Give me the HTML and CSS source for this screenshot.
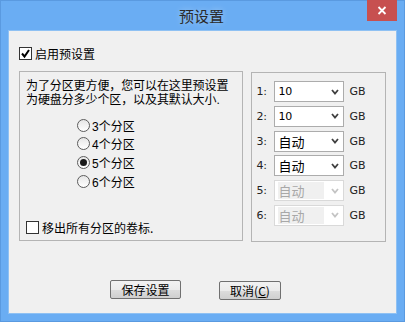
FILE: index.html
```html
<!DOCTYPE html>
<html lang="zh-CN">
<head>
    <meta charset="UTF-8">
    <title>预设置</title>
    <link rel="stylesheet" href="styles.css">
</head>
<body>
    <div class="window">
        <div class="titlebar">
            <span class="title">预设置</span>
            <span class="close-btn">
                <svg width="10" height="9" viewBox="0 0 10 9">
                    <path d="M1.5 1 L8.5 8 M8.5 1 L1.5 8" stroke="#fff" stroke-width="1.8"/>
                </svg>
            </span>
        </div>
        <div class="client">
            <label class="check-row">
                <span class="checkbox checked">
                    <svg width="11" height="11" viewBox="0 0 11 11">
                        <path d="M2 5.5 L4.5 8.5 L9 2" fill="none" stroke="#000" stroke-width="2"/>
                    </svg>
                </span>
                <span>启用预设置</span>
            </label>

            <div class="groups">
                <div class="group left-group">
                    <p class="intro">为了分区更方便，您可以在这里预设置<br>为硬盘分多少个区，以及其默认大小.</p>
                    <div class="radio-list">
                        <div class="radio-row"><span class="radio"></span><span>3个分区</span></div>
                        <div class="radio-row"><span class="radio"></span><span>4个分区</span></div>
                        <div class="radio-row"><span class="radio on"></span><span>5个分区</span></div>
                        <div class="radio-row"><span class="radio"></span><span>6个分区</span></div>
                    </div>
                    <label class="check-row bottom-check">
                        <span class="checkbox"></span>
                        <span>移出所有分区的卷标.</span>
                    </label>
                </div>

                <div class="group right-group">
                    <div class="size-row">
                        <span class="num">1:</span>
                        <span class="combo"><span class="val">10</span><svg class="arrow" width="8" height="6" viewBox="0 0 8 6"><path d="M1 1 L4 4.5 L7 1" fill="none" stroke="#404040" stroke-width="1.8"/></svg></span>
                        <span class="unit">GB</span>
                    </div>
                    <div class="size-row">
                        <span class="num">2:</span>
                        <span class="combo"><span class="val">10</span><svg class="arrow" width="8" height="6" viewBox="0 0 8 6"><path d="M1 1 L4 4.5 L7 1" fill="none" stroke="#404040" stroke-width="1.8"/></svg></span>
                        <span class="unit">GB</span>
                    </div>
                    <div class="size-row">
                        <span class="num">3:</span>
                        <span class="combo"><span class="val cjk">自动</span><svg class="arrow" width="8" height="6" viewBox="0 0 8 6"><path d="M1 1 L4 4.5 L7 1" fill="none" stroke="#404040" stroke-width="1.8"/></svg></span>
                        <span class="unit">GB</span>
                    </div>
                    <div class="size-row">
                        <span class="num">4:</span>
                        <span class="combo"><span class="val cjk">自动</span><svg class="arrow" width="8" height="6" viewBox="0 0 8 6"><path d="M1 1 L4 4.5 L7 1" fill="none" stroke="#404040" stroke-width="1.8"/></svg></span>
                        <span class="unit">GB</span>
                    </div>
                    <div class="size-row">
                        <span class="num">5:</span>
                        <span class="combo disabled"><span class="val cjk">自动</span><svg class="arrow" width="8" height="6" viewBox="0 0 8 6"><path d="M1 1 L4 4.5 L7 1" fill="none" stroke="#c4c4c4" stroke-width="1.8"/></svg></span>
                        <span class="unit">GB</span>
                    </div>
                    <div class="size-row">
                        <span class="num">6:</span>
                        <span class="combo disabled"><span class="val cjk">自动</span><svg class="arrow" width="8" height="6" viewBox="0 0 8 6"><path d="M1 1 L4 4.5 L7 1" fill="none" stroke="#c4c4c4" stroke-width="1.8"/></svg></span>
                        <span class="unit">GB</span>
                    </div>
                </div>
            </div>

            <div class="buttons">
                <button class="btn save-btn">保存设置</button>
                <button class="btn cancel-btn">取消(<u>C</u>)</button>
            </div>
        </div>
    </div>
</body>
</html>
```

FILE: styles.css
```css
* {
    box-sizing: border-box;
}

body {
    margin: 0;
    font-family: "Liberation Sans", "Noto Sans CJK SC", sans-serif;
    font-size: 12px;
    color: #000;
}

.window {
    width: 405px;
    height: 322px;
    background-color: #6aadf3;
    border: 1px solid #5a9ae0;
    display: flex;
    flex-direction: column;
}

.titlebar {
    height: 29px;
    display: flex;
    align-items: center;
    justify-content: center;
    position: relative;
}

.title {
    font-family: "Noto Sans CJK SC", sans-serif;
    font-size: 15px;
    color: #2a2a2a;
    margin-top: -1px;
    margin-left: -2px;
    text-shadow: 0 0 6px rgba(255, 255, 255, 0.4);
}

.close-btn {
    position: absolute;
    top: -1px;
    right: 7px;
    width: 30px;
    height: 21px;
    background-color: #c75050;
    display: flex;
    align-items: center;
    justify-content: center;
}

.client {
    margin: 0 7px;
    height: 284px;
    background-color: #f0f0f0;
    border: 1px solid #8fc1f3;
    padding: 16px 10px 0 10px;
    display: flex;
    flex-direction: column;
}

.check-row {
    display: flex;
    align-items: center;
    height: 13px;
    gap: 3px;
    font-family: "Noto Sans CJK SC", sans-serif;
}

.checkbox {
    width: 13px;
    height: 13px;
    border: 1px solid #333;
    background-color: #fff;
    display: flex;
    align-items: center;
    justify-content: center;
    flex: none;
}

.groups {
    display: flex;
    margin-top: 11px;
    gap: 8px;
}

.group {
    border: 1px solid #b4b4b4;
    height: 170px;
}

.left-group {
    width: 225px;
    padding: 7px 6px 6px 6px;
    display: flex;
    flex-direction: column;
}

/* latin font first keeps the text box short so the two lines sit tight */
.intro {
    margin: 0;
    font-family: "Liberation Sans", "Noto Sans CJK SC", sans-serif;
    line-height: 14px;
    letter-spacing: -0.1px;
}

.radio-list {
    margin-top: 9px;
    padding-left: 51px;
}

.radio-row {
    display: flex;
    align-items: center;
    height: 18.6px;
    gap: 2px;
}

.radio {
    width: 13px;
    height: 13px;
    border-radius: 50%;
    border: 1px solid #5c5c5c;
    background: linear-gradient(#e6e6e6, #ffffff);
    display: flex;
    align-items: center;
    justify-content: center;
}

.radio.on::after {
    content: "";
    width: 7px;
    height: 7px;
    border-radius: 50%;
    background-color: #1a1a1a;
}

.bottom-check {
    margin-top: auto;
}

.right-group {
    width: 135px;
    margin-top: 1px;
    padding: 8px 0 0 4px;
    display: flex;
    flex-direction: column;
    gap: 3.8px;
}

.size-row {
    display: flex;
    align-items: center;
    height: 21px;
}

.num {
    width: 18px;
    font-family: "DejaVu Sans", sans-serif;
    font-size: 11px;
    color: #222;
}

.combo {
    width: 70px;
    height: 21px;
    border: 1px solid #acacac;
    background-color: #fff;
    display: flex;
    align-items: center;
    padding: 0 4px 0 3px;
}

.val {
    flex: 1;
    font-family: "DejaVu Sans", sans-serif;
    font-size: 11px;
}

.val.cjk {
    font-family: "Noto Sans CJK SC", sans-serif;
    font-size: 13px;
}

.combo.disabled {
    border-color: #d9d9d9;
    color: #a8a8a8;
}

.combo.disabled .val {
    flex: none;
    width: 46px;
    margin-right: 7px;
    background-color: #f0f0f0;
    line-height: 17px;
}

.unit {
    margin-left: 5px;
    font-family: "DejaVu Sans", sans-serif;
    font-size: 11px;
    color: #222;
}

.buttons {
    display: flex;
    align-items: flex-start;
    gap: 38px;
    margin-top: 38px;
    padding-left: 91px;
}

.btn {
    height: 19px;
    padding: 0;
    border: 1px solid #707070;
    border-radius: 2px;
    background: linear-gradient(#f2f2f2 0%, #ebebeb 50%, #dddddd 51%, #cfcfcf 100%);
    font-family: "Noto Sans CJK SC", sans-serif;
    font-size: 12px;
    line-height: 17px;
    color: #000;
}

.save-btn {
    width: 71px;
}

.cancel-btn {
    width: 62px;
    margin-top: 1px;
}
```
